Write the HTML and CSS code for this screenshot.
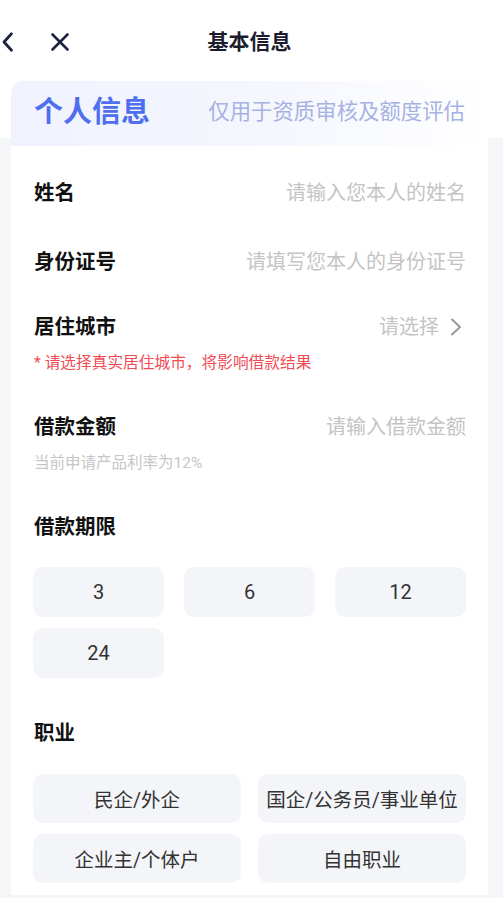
FILE: index.html
```html
<!DOCTYPE html>
<html lang="zh-CN">
<head>
<meta charset="utf-8">
<title>基本信息</title>
<link rel="stylesheet" href="styles.css">
</head>
<body>
<header class="nav">
  <div class="nav-left">
    <svg class="icon-back" width="16" height="24" viewBox="0 0 16 24"><polyline points="11.5,3.8 4,12 11.5,20.2" fill="none" stroke="#1c2340" stroke-width="2.8" stroke-linecap="round" stroke-linejoin="round"/></svg>
    <svg class="icon-close" width="24" height="24" viewBox="0 0 24 24"><path d="M4.5 4.5 L19.5 19.5 M19.5 4.5 L4.5 19.5" fill="none" stroke="#1c2340" stroke-width="2.6" stroke-linecap="round"/></svg>
  </div>
  <div class="nav-title">基本信息</div>
  <div></div>
</header>
<main class="main">
  <section class="card">
    <div class="card-head">
      <span class="head-title">个人信息</span>
      <span class="head-sub">仅用于资质审核及额度评估</span>
    </div>
    <div class="card-body">
      <div class="row r1"><span class="label">姓名</span><span class="ph">请输入您本人的姓名</span></div>
      <div class="row r2"><span class="label">身份证号</span><span class="ph">请填写您本人的身份证号</span></div>
      <div class="row r3"><span class="label">居住城市</span><span class="ph select">请选择<svg class="chev" width="12" height="20" viewBox="0 0 12 20"><polyline points="2,2.5 10,10 2,17.5" fill="none" stroke="#9a9a9a" stroke-width="2" stroke-linecap="round" stroke-linejoin="round"/></svg></span></div>
      <div class="hint red">* 请选择真实居住城市，将影响借款结果</div>
      <div class="row r4"><span class="label">借款金额</span><span class="ph">请输入借款金额</span></div>
      <div class="hint gray">当前申请产品利率为12%</div>
      <div class="row r5"><span class="label">借款期限</span></div>
      <div class="opts three">
        <div class="opt">3</div>
        <div class="opt">6</div>
        <div class="opt">12</div>
        <div class="opt">24</div>
      </div>
      <div class="row r6"><span class="label">职业</span></div>
      <div class="opts two">
        <div class="opt">民企/外企</div>
        <div class="opt">国企/公务员/事业单位</div>
        <div class="opt">企业主/个体户</div>
        <div class="opt">自由职业</div>
      </div>
    </div>
  </section>
</main>
</body>
</html>
```
FILE: styles.css
```css
* { box-sizing: border-box; }
html, body { margin: 0; padding: 0; }
body {
  width: 503px;
  min-height: 898px;
  background: #f5f6f8;
  font-family: Roboto, "Noto Sans CJK SC", sans-serif;
  color: #111;
  overflow: hidden;
}
.nav {
  height: 81px;
  background: #fff;
  display: grid;
  grid-template-columns: 1fr auto 1fr;
  align-items: center;
  padding-top: 2px;
}
.nav-left {
  display: flex;
  align-items: center;
}
.icon-back { display: block; margin-left: 0; }
.icon-close { display: block; margin-left: 32px; }
.nav-title {
  font-size: 21px;
  font-weight: 700;
  color: #1b1d2e;
  line-height: 30px;
  margin-left: -4px;
}
.main {
  background: linear-gradient(#fff 0 57px, #f5f6f8 57px);
  padding: 0 15px 0 11px;
}
.card {
  background: #fff;
  border-radius: 12px 12px 0 0;
}
.card-head {
  height: 65px;
  border-radius: 12px 12px 0 0;
  background: linear-gradient(90deg, #f0f3fe 0%, #f5f7fe 55%, #ffffff 100%);
  display: flex;
  align-items: center;
  justify-content: space-between;
  padding: 0 23px 3px 23px;
}
.head-title {
  font-size: 29px;
  font-weight: 700;
  color: #4f6ff0;
  line-height: 36px;
}
.head-sub {
  font-size: 21.4px;
  color: #a7b2e2;
  line-height: 30px;
}
.card-body {
  padding: 0 22px 12px 22px;
}
.row {
  height: 30px;
  display: flex;
  align-items: center;
  justify-content: space-between;
}
.label {
  font-size: 20.5px;
  font-weight: 700;
  color: #111;
  line-height: 30px;
  margin-left: 1px;
}
.ph {
  font-size: 20px;
  color: #c4c4c4;
  line-height: 30px;
}
.select {
  display: flex;
  align-items: center;
}
.chev { display: block; margin-left: 11px; margin-right: 4px; }
.r1 { margin-top: 32px; }
.r2 { margin-top: 39px; }
.r3 { margin-top: 35px; }
.r4 { margin-top: 39px; }
.r5 { margin-top: 39px; }
.r6 { margin-top: 40px; }
.hint {
  line-height: 20px;
  margin-top: 11px;
  margin-left: 1px;
}
.red { font-size: 15.7px; color: #f04b55; }
.gray { font-size: 15.5px; color: #c6c6c6; }
.opts {
  display: grid;
  row-gap: 11px;
}
.three {
  margin-top: 25px;
  grid-template-columns: repeat(3, 131px);
  column-gap: 20px;
}
.two {
  margin-top: 26px;
  grid-template-columns: repeat(2, 208px);
  column-gap: 17px;
}
.opt {
  height: 50px;
  border-radius: 10px;
  background: #f4f5f9;
  display: flex;
  align-items: center;
  justify-content: center;
  font-size: 20px;
  color: #333;
  white-space: nowrap;
}
.two .opt { font-size: 19.5px; height: 49px; }
```
